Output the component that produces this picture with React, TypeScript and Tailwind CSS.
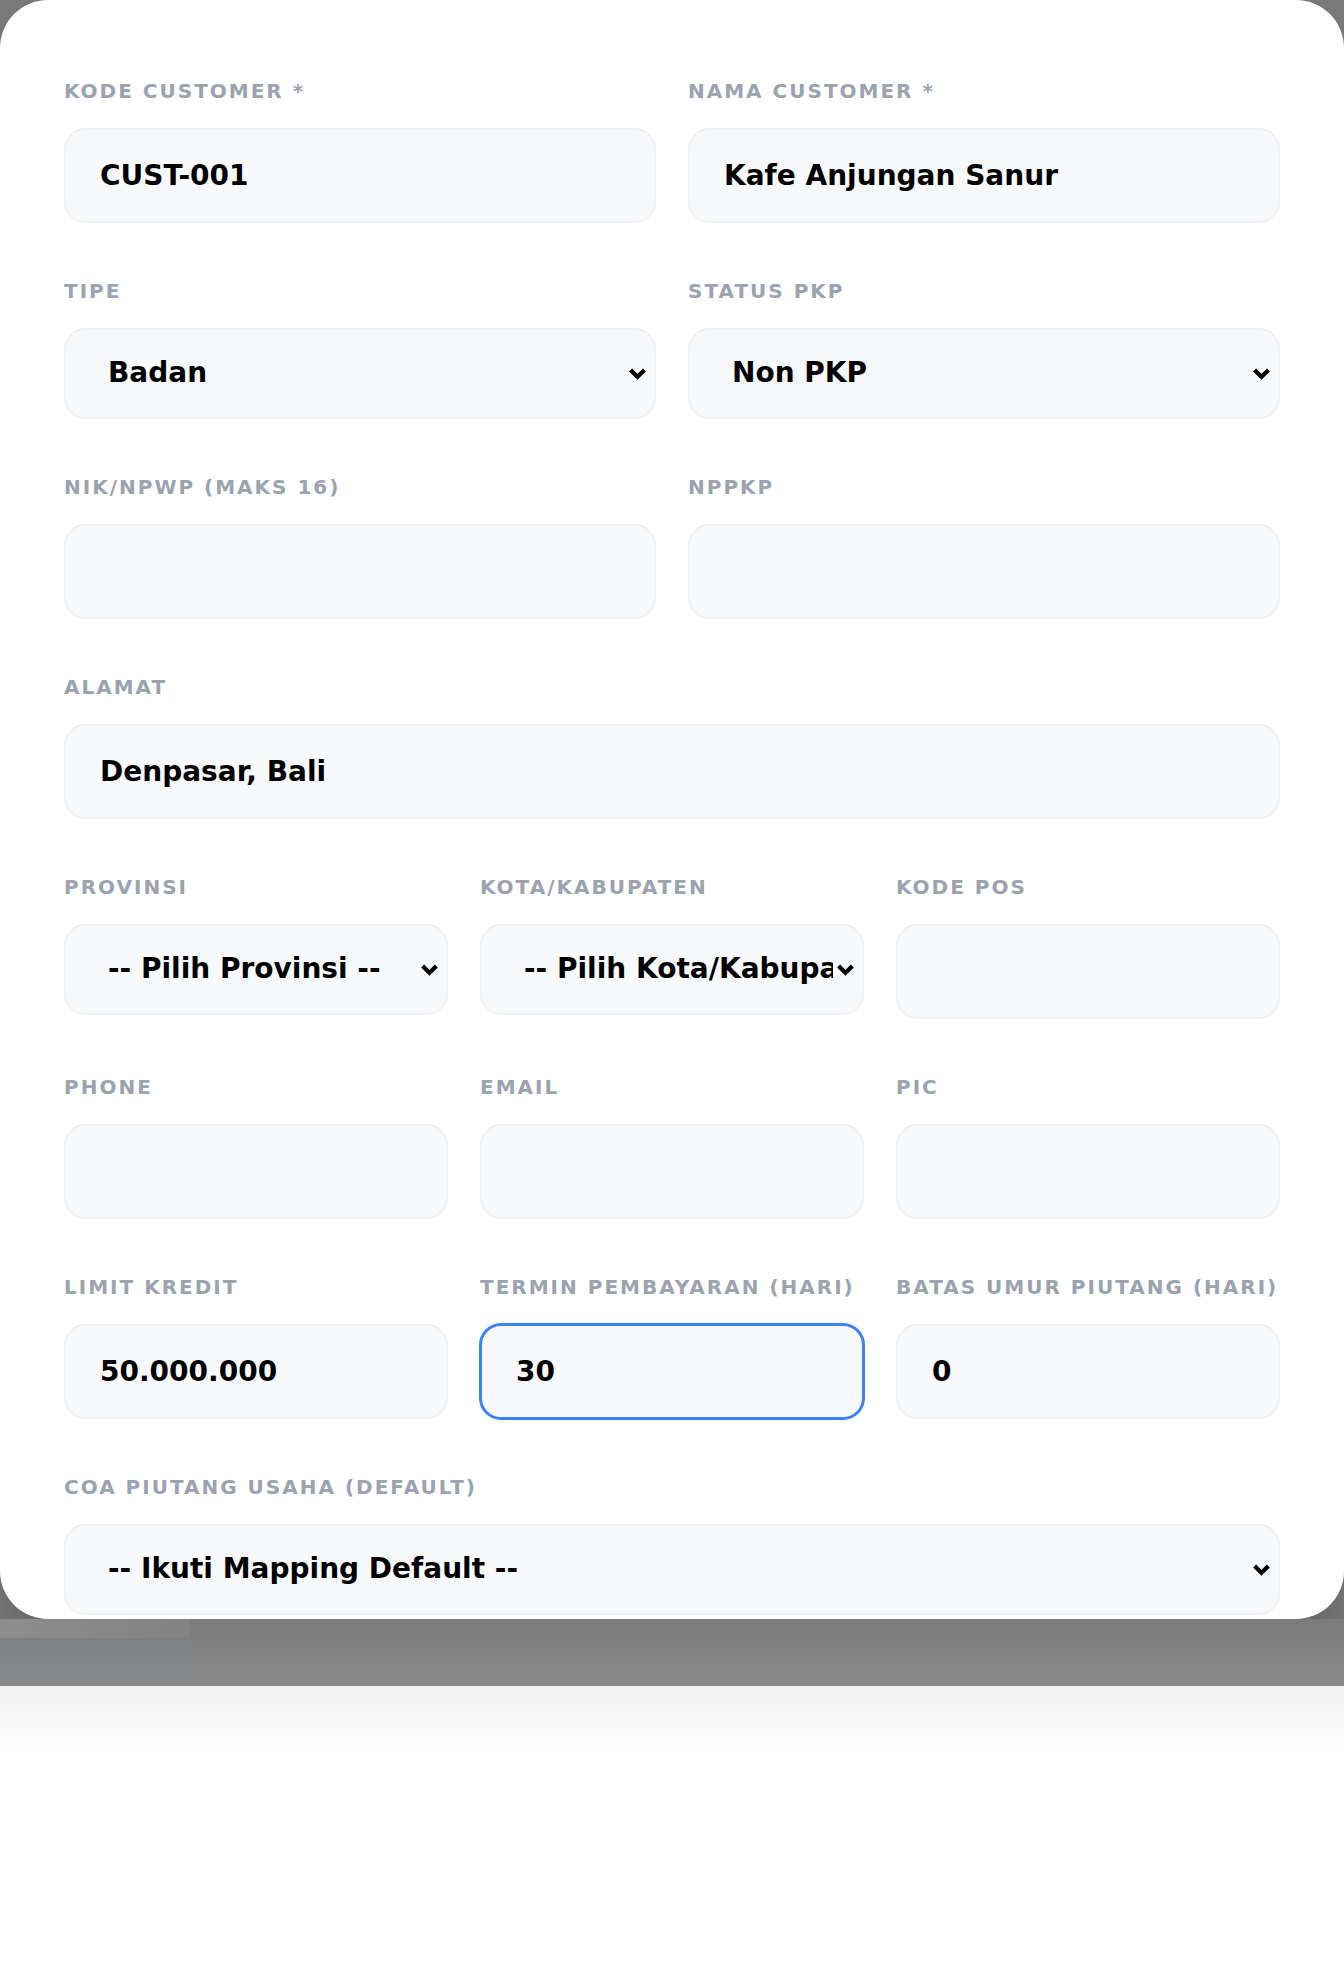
import React from "react";

const font = { fontFamily: '"DejaVu Sans", sans-serif' };

function Label({ children }: { children: React.ReactNode }) {
  return (
    <div className="mb-[25px] text-[20px] leading-6 font-bold tracking-widest text-[#9ca3af] whitespace-nowrap">
      {children}
    </div>
  );
}

function Input({ label, value = "", focused = false }: { label: string; value?: string; focused?: boolean }) {
  return (
    <div className="flex flex-col">
      <Label>{label}</Label>
      <input
        readOnly
        value={value}
        className={
          focused
            ? "h-[95px] w-full rounded-[21px] border-2 border-[#3b82f6] ring-1 ring-[#3b82f6] bg-[#f8f9fb] pl-[34px] pr-8 pb-[1px] text-[28px] font-bold text-black outline-none"
            : "h-[95px] w-full rounded-[21px] border-2 border-[#f0f1f3] bg-[#f8f9fb] pl-[34px] pr-8 pb-[1px] text-[28px] font-bold text-black outline-none"
        }
      />
    </div>
  );
}

function Chevron() {
  return (
    <svg width="19" height="13" viewBox="0 0 19 13" className="shrink-0 ml-[3px]">
      <polyline points="2.6,3 9.5,9.8 16.4,3" fill="none" stroke="#000" strokeWidth="4.2" strokeLinejoin="miter" strokeLinecap="butt" />
    </svg>
  );
}

function Select({ label, value }: { label: string; value: string }) {
  return (
    <div className="flex flex-col">
      <Label>{label}</Label>
      <div className="flex h-[91px] w-full items-center rounded-[21px] border-2 border-[#f0f1f3] bg-[#f8f9fb] pl-[42px] pr-[7px] text-[28px] font-bold text-black">
        <span className="min-w-0 flex-1 overflow-hidden whitespace-nowrap pb-[1px]">{value}</span>
        <Chevron />
      </div>
    </div>
  );
}

export default function App() {
  return (
    <div className="min-h-[1968px] bg-white" style={font}>
      <div className="bg-[#7a7a7a]">
        <div className="h-[1619px] overflow-hidden rounded-[48px] bg-white shadow-2xl">
          <div className="flex flex-col gap-y-14 px-16 pt-[79px]">
            <div className="grid grid-cols-2 items-start gap-x-8">
              <Input label="KODE CUSTOMER *" value="CUST-001" />
              <Input label="NAMA CUSTOMER *" value="Kafe Anjungan Sanur" />
            </div>
            <div className="grid grid-cols-2 items-start gap-x-8">
              <Select label="TIPE" value="Badan" />
              <Select label="STATUS PKP" value="Non PKP" />
            </div>
            <div className="grid grid-cols-2 items-start gap-x-8">
              <Input label="NIK/NPWP (MAKS 16)" />
              <Input label="NPPKP" />
            </div>
            <Input label="ALAMAT" value="Denpasar, Bali" />
            <div className="grid grid-cols-3 items-start gap-x-8">
              <Select label="PROVINSI" value="-- Pilih Provinsi --" />
              <Select label="KOTA/KABUPATEN" value="-- Pilih Kota/Kabupaten --" />
              <Input label="KODE POS" />
            </div>
            <div className="grid grid-cols-3 items-start gap-x-8">
              <Input label="PHONE" />
              <Input label="EMAIL" />
              <Input label="PIC" />
            </div>
            <div className="grid grid-cols-3 items-start gap-x-8">
              <Input label="LIMIT KREDIT" value="50.000.000" />
              <Input label="TERMIN PEMBAYARAN (HARI)" value="30" focused />
              <Input label="BATAS UMUR PIUTANG (HARI)" value="0" />
            </div>
            <Select label="COA PIUTANG USAHA (DEFAULT)" value="-- Ikuti Mapping Default --" />
          </div>
        </div>
        <div className="flex h-[67px]">
          <div className="flex w-[190px] flex-col">
            <div className="h-[19px] bg-gradient-to-r from-[#8e8e8e] to-[#828282]" />
            <div className="h-[2px] bg-[#7d7e80]" />
            <div className="flex-1 bg-gradient-to-b from-[#808184] to-[#8a8b8d]" />
          </div>
          <div className="flex-1 bg-gradient-to-b from-[#7b7b7b] to-[#8a8a8b]" />
        </div>
      </div>
      <div className="h-[70px] bg-gradient-to-b from-[#f1f1f1] to-white" />
    </div>
  );
}
